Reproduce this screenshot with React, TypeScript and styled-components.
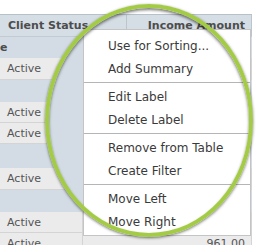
import React from "react";
import styled, { createGlobalStyle } from "styled-components";

const GlobalStyle = createGlobalStyle`
  html, body { margin: 0; padding: 0; background: #ffffff; overflow: hidden; }
  * { box-sizing: border-box; }
`;

const Stage = styled.div`
  position: relative;
  width: 270px;
  height: 245px;
  overflow: hidden;
  font-family: "DejaVu Sans", Verdana, sans-serif;
`;

const Table = styled.div`
  margin-top: 14px;
  width: 252px;
  display: flex;
  flex-direction: column;
`;

const HeaderRow = styled.div`
  height: 23px;
  display: grid;
  grid-template-columns: 127px 125px;
  background: #d5dde5;
  border-top: 1px solid #b8c0c8;
  border-bottom: 1px solid #c2cad2;
`;

const HeaderCell = styled.div<{ $align?: "left" | "right" }>`
  display: flex;
  align-items: center;
  justify-content: ${(p) => (p.$align === "right" ? "flex-end" : "flex-start")};
  padding: ${(p) => (p.$align === "right" ? "0 6px 0 0" : "0 0 0 8px")};
  font-size: 11px;
  font-weight: bold;
  color: #4d4d4d;
  border-right: 1px solid #bcc4cc;
  white-space: nowrap;
`;

const GroupRow = styled.div<{ $h: number }>`
  height: ${(p) => p.$h}px;
  background: #d3dce4;
  display: flex;
  align-items: center;
  font-size: 11px;
  font-weight: bold;
  color: #4d4d4d;
`;

const DataRow = styled.div<{ $h: number }>`
  height: ${(p) => p.$h}px;
  display: grid;
  grid-template-columns: 83px 169px;
  background: #ebebeb;
  border-bottom: 1px solid #d4d4d4;
`;

const DataCell = styled.div<{ $align?: "left" | "right" }>`
  display: flex;
  align-items: center;
  justify-content: ${(p) => (p.$align === "right" ? "flex-end" : "flex-start")};
  padding: ${(p) => (p.$align === "right" ? "0 6px 0 0" : "0 0 0 7px")};
  font-size: 11px;
  color: #555555;
  border-right: 1px solid #d4d4d4;
`;

const LensFill = styled.div`
  position: absolute;
  left: 45px;
  top: 4px;
  width: 208px;
  height: 233px;
  border-radius: 50%;
  background: #d3dce4;
  clip-path: inset(33px 0 0 0);
`;

const Menu = styled.div`
  position: absolute;
  left: 83px;
  top: 29px;
  width: 168px;
  background: #ffffff;
  border: 1px solid #c4c4c4;
  padding: 4px 0 2px;
  display: flex;
  flex-direction: column;
`;

const MenuItem = styled.div`
  height: 23px;
  display: flex;
  align-items: center;
  padding-left: 24px;
  font-size: 12px;
  color: #3a3a3a;
  white-space: nowrap;
`;

const Separator = styled.div`
  height: 1px;
  margin: 2px 0;
  background: #b5b5b5;
`;

const LensRing = styled.div`
  position: absolute;
  left: 45px;
  top: 4px;
  width: 208px;
  height: 233px;
  border-radius: 50%;
  border: 4px solid #a4cb46;
  box-shadow: 0 1px 3px rgba(0, 0, 0, 0.55), inset 0 2px 3px rgba(0, 0, 0, 0.5);
  pointer-events: none;
`;

type Row = { kind: "group" | "data"; h: number; label?: string; amount?: string };

const rows: Row[] = [
  { kind: "group", h: 21, label: "e" },
  { kind: "data", h: 22, label: "Active" },
  { kind: "group", h: 22 },
  { kind: "data", h: 21, label: "Active" },
  { kind: "data", h: 21, label: "Active" },
  { kind: "group", h: 24 },
  { kind: "data", h: 22, label: "Active" },
  { kind: "group", h: 22 },
  { kind: "data", h: 21, label: "Active" },
  { kind: "data", h: 22, label: "Active", amount: "961.00" },
];

const menuGroups = [
  ["Use for Sorting...", "Add Summary"],
  ["Edit Label", "Delete Label"],
  ["Remove from Table", "Create Filter"],
  ["Move Left", "Move Right"],
];

export default function App() {
  return (
    <Stage>
      <GlobalStyle />
      <Table>
        <HeaderRow>
          <HeaderCell>Client Status</HeaderCell>
          <HeaderCell $align="right">Income Amount</HeaderCell>
        </HeaderRow>
        {rows.map((r, i) =>
          r.kind === "group" ? (
            <GroupRow key={i} $h={r.h}>
              {r.label}
            </GroupRow>
          ) : (
            <DataRow key={i} $h={r.h}>
              <DataCell>{r.label}</DataCell>
              <DataCell $align="right">{r.amount}</DataCell>
            </DataRow>
          )
        )}
      </Table>
      <LensFill />
      <Menu>
        {menuGroups.map((g, gi) => (
          <React.Fragment key={gi}>
            {gi > 0 && <Separator />}
            {g.map((item) => (
              <MenuItem key={item}>{item}</MenuItem>
            ))}
          </React.Fragment>
        ))}
      </Menu>
      <LensRing />
    </Stage>
  );
}
